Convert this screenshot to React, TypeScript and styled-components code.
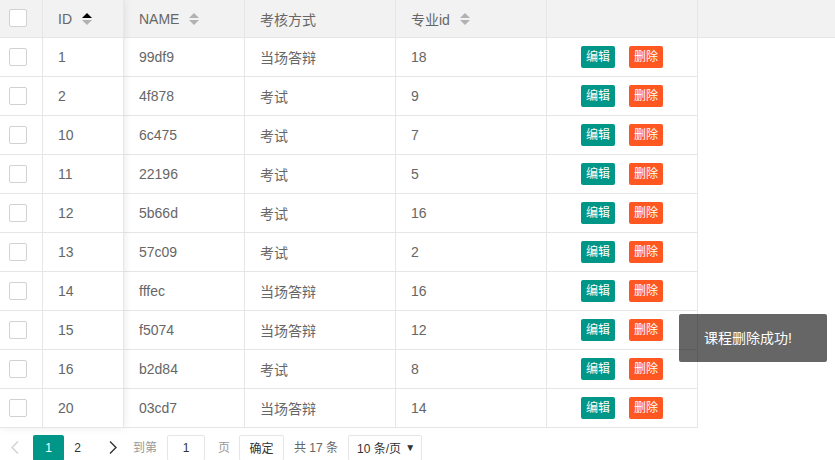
import React from "react";
import styled, { createGlobalStyle } from "styled-components";

const Global = createGlobalStyle`
  html, body { margin: 0; padding: 0; background: #fff; }
  body {
    font-family: "Liberation Sans", Arial, "Noto Sans CJK SC", sans-serif;
    font-size: 14px;
    color: #666;
  }
  * { box-sizing: border-box; }
`;

type Row = { id: number; name: string; mode: string; major: number };

const rows: Row[] = [
  { id: 1, name: "99df9", mode: "当场答辩", major: 18 },
  { id: 2, name: "4f878", mode: "考试", major: 9 },
  { id: 10, name: "6c475", mode: "考试", major: 7 },
  { id: 11, name: "22196", mode: "考试", major: 5 },
  { id: 12, name: "5b66d", mode: "考试", major: 16 },
  { id: 13, name: "57c09", mode: "考试", major: 2 },
  { id: 14, name: "fffec", mode: "当场答辩", major: 16 },
  { id: 15, name: "f5074", mode: "当场答辩", major: 12 },
  { id: 16, name: "b2d84", mode: "考试", major: 8 },
  { id: 20, name: "03cd7", mode: "当场答辩", major: 14 },
];

const Page = styled.div`
  position: relative;
  width: 835px;
  height: 460px;
  overflow: hidden;
`;

const TableView = styled.div`
  display: flex;
  align-items: flex-start;
  width: 835px;
  background: #fff;
`;

const FixedPart = styled.div`
  position: relative;
  z-index: 2;
  flex: none;
  width: 124px;
  background: #fff;
  box-shadow: 1px 0 8px rgba(0, 0, 0, 0.08);
`;

const MainPart = styled.div`
  flex: 1;
  min-width: 0;
`;

const HeadRow = styled.div`
  display: flex;
  height: 38px;
  background: #f2f2f2;
  border-bottom: 1px solid #e6e6e6;
`;

const BodyRow = styled.div<{ $w?: number }>`
  display: flex;
  height: 39px;
  width: ${(p) => (p.$w ? `${p.$w}px` : "auto")};
  border-bottom: 1px solid #e6e6e6;
  background: #fff;
`;

const Cell = styled.div<{ $w: number; $center?: boolean; $pl?: number }>`
  flex: none;
  width: ${(p) => p.$w}px;
  height: 100%;
  border-right: 1px solid #e6e6e6;
  display: flex;
  align-items: center;
  justify-content: ${(p) => (p.$center ? "center" : "flex-start")};
  padding: 0 0 0 ${(p) => (p.$center ? 0 : p.$pl ?? 15)}px;
  color: #666;
  font-size: 14px;
  white-space: nowrap;
  overflow: hidden;
`;

const Filler = styled.div`
  flex: 1;
`;

const CheckBox = styled.span`
  display: inline-block;
  width: 18px;
  height: 18px;
  border: 1px solid #d2d2d2;
  border-radius: 2px;
  background: #fff;
  margin-top: -1px;
`;

const SortIcon = styled.svg`
  margin-left: 10px;
  flex: none;
`;

const Btn = styled.span<{ $tone: "edit" | "del" }>`
  display: inline-block;
  height: 22px;
  line-height: 22px;
  padding: 0 5px;
  font-size: 12px;
  color: #fff;
  border-radius: 2px;
  background: ${(p) => (p.$tone === "edit" ? "#009688" : "#FF5722")};
  & + & {
    margin-left: 14px;
  }
`;

const Pager = styled.div`
  display: flex;
  align-items: center;
  height: 32px;
  padding: 7px 0 0 0;
  font-size: 12px;
  color: #333;
`;

const Arrow = styled.span<{ $w: number; $ml: number }>`
  display: inline-flex;
  align-items: center;
  justify-content: center;
  width: ${(p) => p.$w}px;
  margin-left: ${(p) => p.$ml}px;
  height: 26px;
`;

const PageNum = styled.span<{ $cur?: boolean; $ml?: number }>`
  display: inline-block;
  width: 31px;
  height: 26px;
  line-height: 26px;
  text-align: center;
  margin-left: ${(p) => p.$ml ?? 0}px;
  border-radius: 2px;
  background: ${(p) => (p.$cur ? "#009688" : "transparent")};
  color: ${(p) => (p.$cur ? "#fff" : "#333")};
`;

const Label = styled.span<{ $ml: number; $c?: string }>`
  margin-left: ${(p) => p.$ml}px;
  color: ${(p) => p.$c ?? "#999"};
  line-height: 26px;
  white-space: nowrap;
`;

const Box = styled.span<{ $w: number; $ml: number }>`
  display: inline-flex;
  align-items: center;
  justify-content: center;
  width: ${(p) => p.$w}px;
  height: 26px;
  margin-left: ${(p) => p.$ml}px;
  border: 1px solid #e6e6e6;
  border-radius: 2px;
  background: #fff;
  color: #333;
  font-size: 12px;
`;

const SelectBox = styled(Box)`
  justify-content: space-between;
  padding: 0 6px 0 8px;
`;

const Toast = styled.div`
  position: absolute;
  left: 679px;
  top: 314px;
  width: 148px;
  height: 48px;
  padding: 12px 0 12px 25px;
  line-height: 24px;
  text-align: left;
  white-space: nowrap;
  font-size: 14px;
  color: #fff;
  background: rgba(0, 0, 0, 0.6);
  border-radius: 2px;
  z-index: 10;
`;

const Sort: React.FC<{ active?: boolean }> = ({ active }) => (
  <SortIcon width="10" height="12" viewBox="0 0 10 12">
    <polygon points="0,5 5,0 10,5" fill={active ? "#000" : "#b2b2b2"} />
    <polygon points="0,7 10,7 5,12" fill="#b2b2b2" />
  </SortIcon>
);

const Chevron: React.FC<{ dir: "l" | "r"; color: string }> = ({ dir, color }) => (
  <svg width="8" height="13" viewBox="0 0 8 13">
    <polyline
      points={dir === "l" ? "7,0.5 1,6.5 7,12.5" : "1,0.5 7,6.5 1,12.5"}
      fill="none"
      stroke={color}
      strokeWidth="1.4"
    />
  </svg>
);

export default function App() {
  return (
    <Page>
      <Global />
      <TableView>
        <FixedPart>
          <HeadRow>
            <Cell $w={43} $pl={9}>
              <CheckBox />
            </Cell>
            <Cell $w={81}>
              ID
              <Sort active />
            </Cell>
          </HeadRow>
          {rows.map((r) => (
            <BodyRow key={r.id}>
              <Cell $w={43} $pl={9}>
                <CheckBox />
              </Cell>
              <Cell $w={81}>{r.id}</Cell>
            </BodyRow>
          ))}
        </FixedPart>
        <MainPart>
          <HeadRow>
            <Cell $w={121}>
              NAME
              <Sort />
            </Cell>
            <Cell $w={151}>考核方式</Cell>
            <Cell $w={151}>
              专业id
              <Sort />
            </Cell>
            <Cell $w={151} />
            <Filler />
          </HeadRow>
          {rows.map((r) => (
            <BodyRow key={r.id} $w={574}>
              <Cell $w={121}>{r.name}</Cell>
              <Cell $w={151}>{r.mode}</Cell>
              <Cell $w={151}>{r.major}</Cell>
              <Cell $w={151} $center>
                <Btn $tone="edit">编辑</Btn>
                <Btn $tone="del">删除</Btn>
              </Cell>
            </BodyRow>
          ))}
        </MainPart>
      </TableView>
      <Pager>
        <Arrow $w={16} $ml={7}>
          <Chevron dir="l" color="#d2d2d2" />
        </Arrow>
        <PageNum $cur $ml={10}>1</PageNum>
        <PageNum $ml={-2}>2</PageNum>
        <Arrow $w={40} $ml={0}>
          <Chevron dir="r" color="#333" />
        </Arrow>
        <Label $ml={0}>到第</Label>
        <Box $w={38} $ml={10}>1</Box>
        <Label $ml={13}>页</Label>
        <Box $w={45} $ml={9}>确定</Box>
        <Label $ml={10} $c="#666">共 17 条</Label>
        <SelectBox $w={74} $ml={10}>
          <span>10 条/页</span>
          <span style={{ fontSize: 10 }}>▼</span>
        </SelectBox>
      </Pager>
      <Toast>课程删除成功!</Toast>
    </Page>
  );
}
